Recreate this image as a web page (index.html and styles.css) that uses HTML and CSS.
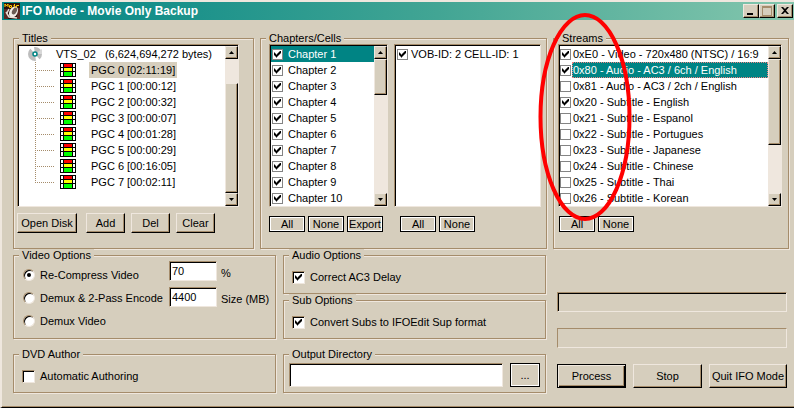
FILE: index.html
```
<!DOCTYPE html>
<html lang="en">
<head>
<meta charset="utf-8">
<title>IFO Mode - Movie Only Backup</title>
<link rel="stylesheet" href="styles.css">
</head>
<body>
<svg class="defs" aria-hidden="true">
  <symbol id="film" viewBox="0 0 16 14" shape-rendering="crispEdges">
    <path d="M0 0h16v14H0z" fill="#000"/>
    <path d="M1 1h2v3H1zM1 5h2v3H1zM1 9h2v4H1zM13 1h2v3h-2zM13 5h2v3h-2zM13 9h2v4h-2z" fill="#fff"/>
    <path d="M4 1h8v3H4z" fill="#f00"/>
    <path d="M4 5h8v3H4z" fill="#ff0"/>
    <path d="M4 9h8v4H4z" fill="#0f0"/>
  </symbol>
</svg>
<main class="window">
  <header class="titlebar">
    <svg class="app-icon" viewBox="0 0 16 16" aria-hidden="true">
      <path d="M0 0h16v16H0z" fill="#2a100c"/>
      <path d="M0 6h4v10H0zM13 5h3v11h-3z" fill="#5a2a24"/>
      <ellipse cx="9.500" cy="9" rx="4" ry="6" transform="rotate(28 9.500 9)" fill="#f4eee8"/>
      <ellipse cx="10.500" cy="8" rx="2.200" ry="3.800" transform="rotate(28 10.500 8)" fill="#6c5c54"/>
      <path d="M2 9l3 5 8 1M5 6L3 10" stroke="#e8dcd4" stroke-width="1.500" fill="none"/>
      <path d="M1 4V1l1.500 2L4 1v3M5.500 2.500h2v2h-2zM9.500 2.500H11M10.500 1v3.500M12.500 4.500v-2H15" stroke="#ffc800" fill="none"/>
    </svg>
    <h1>IFO Mode - Movie Only Backup</h1>
    <button class="raised caption" aria-label="Minimize"><svg viewBox="0 0 12 10"><path d="M2 7h6v2H2z"/></svg></button>
    <button class="raised caption" aria-label="Maximize" disabled><svg viewBox="0 0 12 10"><path d="M1 0h10v10H1zM2 2v7h8V2z" fill="#a58c6b" fill-rule="evenodd"/></svg></button>
    <button class="raised caption close" aria-label="Close"><svg viewBox="0 0 12 10"><path d="M2 1h2l2 2 2-2h2L7 4.500 10 8H8L6 6 4 8H2l3-3.500z"/></svg></button>
  </header>

  <div class="content">
    <div class="top">
      <fieldset class="group titles">
        <legend>Titles</legend>
        <div class="list">
          <div class="rows tree">
            <div class="disc-row">
              <svg class="disc" viewBox="0 0 16 16" aria-hidden="true">
                <circle cx="8" cy="8" r="7" fill="#bdbdbd"/>
                <path d="M8 8L2 1h5zM8 8l6 7H9z" fill="#fff"/>
                <path d="M8 8l7-5v5z" fill="#d8d8d8"/>
                <circle cx="8" cy="8" r="2" fill="#fff" stroke="#008484" stroke-width="1.500"/>
              </svg>
              <span>VTS_02 &nbsp; (6,624,694,272 bytes)</span>
            </div>
            <ul>
              <li><i class="branch"></i><svg class="film"><use href="#film"/></svg><span class="selected">PGC 0 [02:11:19]</span></li>
              <li><i class="branch"></i><svg class="film"><use href="#film"/></svg><span>PGC 1 [00:00:12]</span></li>
              <li><i class="branch"></i><svg class="film"><use href="#film"/></svg><span>PGC 2 [00:00:32]</span></li>
              <li><i class="branch"></i><svg class="film"><use href="#film"/></svg><span>PGC 3 [00:00:07]</span></li>
              <li><i class="branch"></i><svg class="film"><use href="#film"/></svg><span>PGC 4 [00:01:28]</span></li>
              <li><i class="branch"></i><svg class="film"><use href="#film"/></svg><span>PGC 5 [00:00:29]</span></li>
              <li><i class="branch"></i><svg class="film"><use href="#film"/></svg><span>PGC 6 [00:16:05]</span></li>
              <li><i class="branch"></i><svg class="film"><use href="#film"/></svg><span>PGC 7 [00:02:11]</span></li>
            </ul>
          </div>
          <div class="scrollbar"><i class="raised arrow up"></i><i class="track low"><i class="raised thumb"></i></i><i class="raised arrow down"></i></div>
        </div>
        <div class="actions">
          <button class="raised wide">Open Disk</button>
          <button class="raised">Add</button>
          <button class="raised">Del</button>
          <button class="raised">Clear</button>
        </div>
      </fieldset>

      <fieldset class="group chapters">
        <legend>Chapters/Cells</legend>
        <div class="pane">
          <div class="list">
            <div class="rows">
              <label class="row active"><input type="checkbox" checked>Chapter 1</label>
              <label class="row"><input type="checkbox" checked>Chapter 2</label>
              <label class="row"><input type="checkbox" checked>Chapter 3</label>
              <label class="row"><input type="checkbox" checked>Chapter 4</label>
              <label class="row"><input type="checkbox" checked>Chapter 5</label>
              <label class="row"><input type="checkbox" checked>Chapter 6</label>
              <label class="row"><input type="checkbox" checked>Chapter 7</label>
              <label class="row"><input type="checkbox" checked>Chapter 8</label>
              <label class="row"><input type="checkbox" checked>Chapter 9</label>
              <label class="row"><input type="checkbox" checked>Chapter 10</label>
            </div>
            <div class="scrollbar"><i class="raised arrow up"></i><i class="track"><i class="raised thumb short"></i></i><i class="raised arrow down"></i></div>
          </div>
          <div class="picks">
            <button class="framed">All</button><button class="framed">None</button><button class="framed">Export</button>
          </div>
        </div>
        <div class="pane cells">
          <div class="list">
            <div class="rows"><label class="row near"><input type="checkbox" checked>VOB-ID: 2 CELL-ID: 1</label></div>
          </div>
          <div class="picks indented">
            <button class="framed">All</button><button class="framed">None</button>
          </div>
        </div>
      </fieldset>

      <fieldset class="group streams">
        <legend>Streams</legend>
        <div class="list">
          <div class="rows">
            <label class="row"><input type="checkbox" checked><span>0xE0 - Video - 720x480 (NTSC) / 16:9</span></label>
            <label class="row"><input type="checkbox" checked><span class="focused">0x80 - Audio - AC3 / 6ch / English</span></label>
            <label class="row"><input type="checkbox"><span>0x81 - Audio - AC3 / 2ch / English</span></label>
            <label class="row"><input type="checkbox" checked><span>0x20 - Subtitle - English</span></label>
            <label class="row"><input type="checkbox"><span>0x21 - Subtitle - Espanol</span></label>
            <label class="row"><input type="checkbox"><span>0x22 - Subtitle - Portugues</span></label>
            <label class="row"><input type="checkbox"><span>0x23 - Subtitle - Japanese</span></label>
            <label class="row"><input type="checkbox"><span>0x24 - Subtitle - Chinese</span></label>
            <label class="row"><input type="checkbox"><span>0x25 - Subtitle - Thai</span></label>
            <label class="row"><input type="checkbox"><span>0x26 - Subtitle - Korean</span></label>
          </div>
          <div class="scrollbar"><i class="raised arrow up"></i><i class="track"><i class="raised thumb"></i></i><i class="raised arrow down"></i></div>
        </div>
        <div class="picks">
          <button class="framed">All</button><button class="framed">None</button>
        </div>
        <svg class="marker" viewBox="0 0 94 210" aria-hidden="true"><ellipse cx="47" cy="105" rx="44.500" ry="102" fill="none" stroke="#f00" stroke-width="4"/></svg>
      </fieldset>
    </div>

    <div class="bottom">
      <div class="column">
        <fieldset class="group video">
          <legend>Video Options</legend>
          <div class="modes">
            <label class="option"><input type="radio" name="mode" checked>Re-Compress Video</label>
            <label class="option"><input type="radio" name="mode">Demux &amp; 2-Pass Encode</label>
            <label class="option"><input type="radio" name="mode">Demux Video</label>
          </div>
          <div class="sizes">
            <div class="size"><input class="sunken" id="percent" type="text" value="70"><label for="percent">%</label></div>
            <div class="size"><input class="sunken" id="megabytes" type="text" value="4400"><label for="megabytes">Size (MB)</label></div>
          </div>
        </fieldset>
        <fieldset class="group single">
          <legend>DVD Author</legend>
          <label class="option"><input type="checkbox">Automatic Authoring</label>
        </fieldset>
      </div>

      <div class="column">
        <div>
          <fieldset class="group single">
            <legend>Audio Options</legend>
            <label class="option"><input type="checkbox" checked>Correct AC3 Delay</label>
          </fieldset>
          <fieldset class="group single">
            <legend>Sub Options</legend>
            <label class="option"><input type="checkbox" checked>Convert Subs to IFOEdit Sup format</label>
          </fieldset>
        </div>
        <fieldset class="group output">
          <legend>Output Directory</legend>
          <input class="sunken" type="text" aria-label="Output Directory">
          <button class="framed">...</button>
        </fieldset>
      </div>

      <div class="status">
        <div class="progress deep" role="progressbar" aria-label="Progress"></div>
        <div class="progress" role="status"></div>
        <div class="commands">
          <button class="raised default">Process</button>
          <button class="raised">Stop</button>
          <button class="raised quit">Quit IFO Mode</button>
        </div>
      </div>
    </div>
  </div>
</main>
</body>
</html>
```
FILE: styles.css
```
:root {
  --face: #d6cebd;
  --light: #efe7de;
  --shade: #a58c6b;
  --teal: #008484;
}

* { box-sizing: border-box; }

body {
  margin: 0;
  background: var(--face);
  color: #000;
  font: 11px/16px "Liberation Sans", Arial, sans-serif;
}

button, input { font: inherit; color: inherit; }
button { padding: 0; white-space: nowrap; }
label, span { white-space: nowrap; }
.defs { display: none; }

.window {
  min-height: 100vh;
  border-style: solid;
  border-width: 2px 0 1px 2px;
  border-color: var(--light) var(--light) #000 var(--light);
  box-shadow: inset 0 -1px 0 var(--shade);
}

.titlebar {
  display: flex;
  align-items: center;
  height: 18px;
  padding: 0 1px 0 2px;
  background: linear-gradient(90deg, #008484, #42a594 55%, #84c6ad);
}
.titlebar h1 {
  flex: 1;
  margin: 0 0 0 2px;
  color: #fff;
  font-size: 12px;
  line-height: 18px;
}
.app-icon { width: 16px; height: 16px; }

.raised {
  border: 1px solid;
  border-color: var(--light) #000 #000 var(--light);
  background: var(--face);
  box-shadow: inset -1px -1px 0 var(--shade);
}
.caption {
  display: flex;
  align-items: center;
  justify-content: center;
  width: 16px;
  height: 14px;
}
.caption svg { width: 12px; height: 10px; }
.caption.close { margin-left: 2px; }

.content { padding: 12px 5px 12px 11px; }

.top {
  display: grid;
  grid-template-columns: 241fr 287fr 236fr;
  gap: 6px;
}

.group {
  --inset: 8px;
  min-width: 0;
  margin: 0;
  padding: 0 var(--inset);
  border: 1px solid var(--shade);
  box-shadow: inset 1px 1px 0 var(--light), 1px 1px 0 var(--light);
}
.group legend {
  height: 12px;
  margin-left: calc(5px - var(--inset));
  padding: 0 3px;
  background: var(--face);
  line-height: 12px;
}
.top .group { padding-bottom: 15px; }
.top .titles { --inset: 3px; padding-right: 14px; }
.top .chapters { display: flex; gap: 6px; padding-right: 5px; }
.top .streams { --inset: 4px; position: relative; padding-right: 6px; }

.list {
  display: flex;
  height: 163px;
  border: 1px solid;
  border-color: var(--shade) var(--light) var(--light) var(--shade);
  background: #fff;
  box-shadow: inset 1px 1px 0 #000;
  padding: 1px 0 0 1px;
}
.rows { flex: 1; min-width: 0; overflow: hidden; }

.scrollbar {
  display: flex;
  flex-direction: column;
  width: 13px;
  background: var(--light);
}
.scrollbar i { display: block; }
.arrow { height: 13px; padding: 4px 3px; }
.arrow::before {
  content: "";
  display: block;
  width: 5px;
  height: 3px;
  background: #000;
}
.up::before { clip-path: polygon(50% 0, 100% 100%, 0 100%); }
.down::before { clip-path: polygon(0 0, 100% 0, 50% 100%); }
.track { flex: 1; }
.track.low { padding-top: 24px; }
.thumb { height: 64%; }
.low .thumb { height: 100%; }
.thumb.short { height: 27%; }

.disc-row, .tree li { display: flex; align-items: center; height: 16px; }
.disc { width: 16px; height: 16px; margin: 0 13px 0 8px; }
.tree ul { margin: 0; padding: 0 0 0 16px; list-style: none; }
.branch {
  width: 19px;
  height: 16px;
  background:
    repeating-linear-gradient(180deg, var(--shade) 0 1px, transparent 1px 2px) 0 0 / 1px 100% no-repeat,
    repeating-linear-gradient(90deg, var(--shade) 0 1px, transparent 1px 2px) 0 8px / 100% 1px no-repeat;
}
.tree li:last-child .branch { background-size: 1px 8px, 100% 1px; }
.film { width: 16px; height: 14px; margin: 0 13px 0 6px; }
.tree li span { padding: 0 2px; }
.tree .selected { background: var(--face); }

.actions { display: flex; gap: 6px; margin-top: 6px; }
.actions button { width: 39px; height: 20px; }
.actions .wide { width: 60px; margin-right: 3px; }

.row { display: flex; align-items: center; height: 16px; }
.row input {
  flex: none;
  width: 11px;
  height: 11px;
  margin: 0 5px 0 1px;
  padding: 1px;
  border: 1px solid #848484;
}
.row.near input { margin-right: 3px; }
.streams .row input { margin: 0 1px 0 0; }
.row.active, .focused { background: var(--teal); color: #fff; }
.streams .row span { flex: 1; padding-left: 1px; }
.focused { outline: 1px dotted #f08484; outline-offset: -1px; }

input[type="checkbox"], input[type="radio"] {
  appearance: none;
  background: #fff;
}
input[type="checkbox"]:checked::before {
  content: "";
  display: block;
  width: 7px;
  height: 7px;
  background: #000;
  clip-path: polygon(0 2px, 1px 2px, 1px 3px, 2px 3px, 2px 4px, 3px 4px, 3px 3px, 4px 3px, 4px 2px, 5px 2px, 5px 1px, 6px 1px, 6px 0, 7px 0, 7px 3px, 6px 3px, 6px 4px, 5px 4px, 5px 5px, 4px 5px, 4px 6px, 3px 6px, 3px 7px, 2px 7px, 2px 6px, 1px 6px, 1px 5px, 0 5px);
}

.pane { flex: 119; min-width: 0; }
.pane.cells { flex: 147; }
.picks { display: flex; gap: 3px; margin-top: 9px; }
.picks.indented { padding-left: 6px; }
.framed {
  border: 1px solid #000;
  background: var(--face);
  box-shadow: inset 0 0 0 1px #fff;
}
.picks .framed { width: 36px; height: 16px; line-height: 14px; }
.streams .picks { padding-left: 1px; }

.marker {
  position: absolute;
  top: -32px;
  left: -16px;
  width: 94px;
  height: 210px;
  pointer-events: none;
}

.bottom {
  display: grid;
  grid-template-columns: 263fr 263fr 236fr;
  gap: 7px;
}
.column { display: flex; flex-direction: column; gap: 9px; min-width: 0; }

.option { display: flex; align-items: center; }
.option input {
  flex: none;
  width: 13px;
  height: 13px;
  margin: 0 5px 0 0;
  padding: 2px;
  border: 1px solid;
  border-color: var(--shade) var(--light) var(--light) var(--shade);
  box-shadow: inset 1px 1px 0 #000;
}
.option input[type="radio"] {
  width: 12px;
  height: 12px;
  padding: 3px;
  border-radius: 50%;
}
.option input[type="radio"]:checked::before {
  content: "";
  display: block;
  width: 4px;
  height: 4px;
  border-radius: 50%;
  background: #000;
}

.video { --inset: 9px; display: flex; height: 90px; padding-right: 0; }
.modes { flex: 0 0 146px; padding-top: 2px; }
.modes .option { height: 23px; }
.sizes { display: flex; flex-direction: column; gap: 6px; }
.size { display: flex; align-items: flex-end; gap: 4px; }
.sunken {
  min-width: 0;
  border: 1px solid;
  border-color: var(--shade) var(--light) var(--light) var(--shade);
  border-radius: 0;
  background: #fff;
  box-shadow: inset 1px 1px 0 #000;
}
.size .sunken { width: 48px; height: 20px; padding: 0 2px; }

.single { padding-top: 9px; padding-bottom: 9px; }
.single .option { height: 14px; }

.output { --inset: 5px; display: flex; gap: 7px; padding-top: 3px; padding-bottom: 5px; }
.output .sunken { flex: 1; height: 24px; }
.output .framed { width: 30px; height: 24px; }

.status {
  display: flex;
  flex-direction: column;
  justify-content: flex-end;
  gap: 16px;
  padding: 0 2px 5px 4px;
}
.progress {
  height: 20px;
  border: 1px solid;
  border-color: var(--shade) var(--light) var(--light) var(--shade);
}
.progress.deep { box-shadow: inset 1px 1px 0 #000; }
.commands { display: flex; justify-content: space-between; }
.commands button { width: 69px; height: 24px; }
.commands .quit { width: 78px; }
.commands .default {
  border-color: #000;
  box-shadow: inset 1px 1px 0 var(--light), inset -1px -1px 0 #000, inset -2px -2px 0 var(--shade);
}
```
